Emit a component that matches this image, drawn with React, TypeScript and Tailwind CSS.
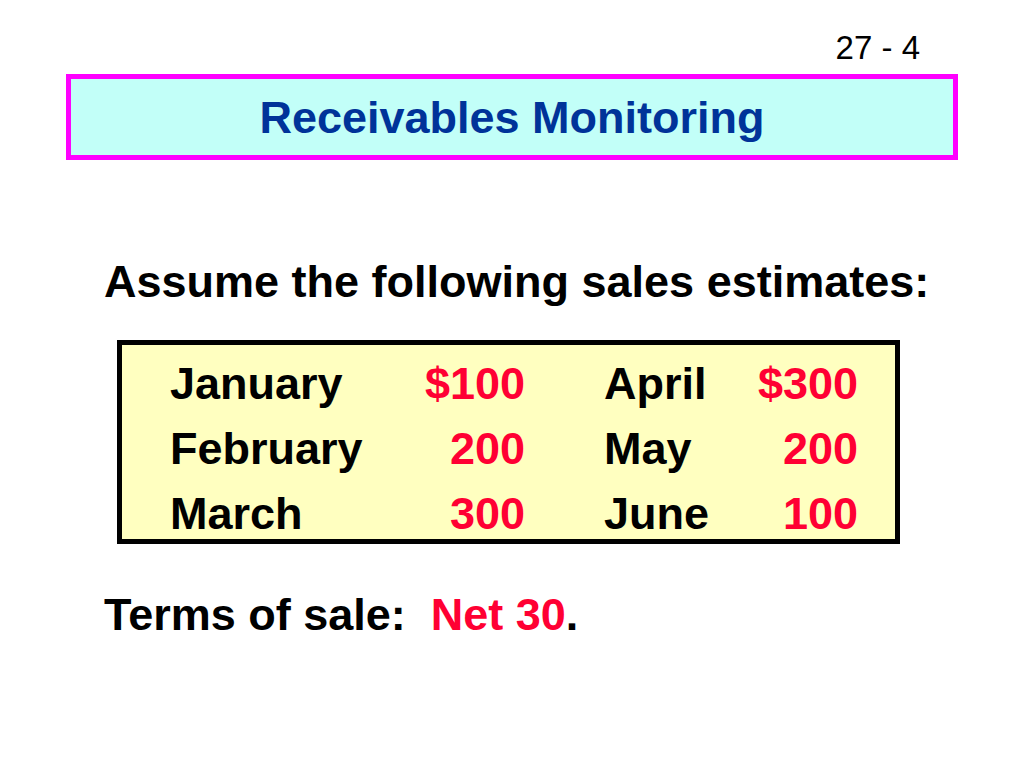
const sales = [
  { m1: "January", v1: "$100", m2: "April", v2: "$300" },
  { m1: "February", v1: "200", m2: "May", v2: "200" },
  { m1: "March", v1: "300", m2: "June", v2: "100" },
];

export default function App() {
  return (
    <div className="w-[1024px] h-[768px] bg-white font-['Liberation_Sans',Arial,sans-serif] text-black">
      {/* numéro de diapo */}
      <div className="flex justify-end pr-[104px] pt-[31px] text-[33px] leading-none">
        27 - 4
      </div>

      {/* titre */}
      <div className="ml-[66px] mt-[10px] w-[892px] h-[86px] border-[5px] border-[#ff00ff] bg-[#c2fff8] flex items-center justify-center">
        <h1 className="text-[45px] leading-none font-bold text-[#003399]">
          Receivables Monitoring
        </h1>
      </div>

      <p className="ml-[104px] mt-[99px] text-[45px] leading-none font-bold">
        Assume the following sales estimates:
      </p>

      {/* tableau des ventes */}
      <div className="ml-[117px] mt-[36px] w-[783px] h-[204px] border-[5px] border-black bg-[#ffffc0] pl-[48px] pt-[16px] flex flex-col gap-[20px]">
        {sales.map((row) => (
          <div key={row.m1} className="flex gap-[79px] text-[45px] leading-none font-bold">
            <div className="w-[355px] flex justify-between">
              <span>{row.m1}</span>
              <span className="text-[#ff0033]">{row.v1}</span>
            </div>
            <div className="w-[254px] flex justify-between">
              <span>{row.m2}</span>
              <span className="text-[#ff0033]">{row.v2}</span>
            </div>
          </div>
        ))}
      </div>

      <p className="ml-[104px] mt-[48px] text-[45px] leading-none font-bold">
        Terms of sale:&nbsp; <span className="text-[#ff0033]">Net 30</span>.
      </p>
    </div>
  );
}
